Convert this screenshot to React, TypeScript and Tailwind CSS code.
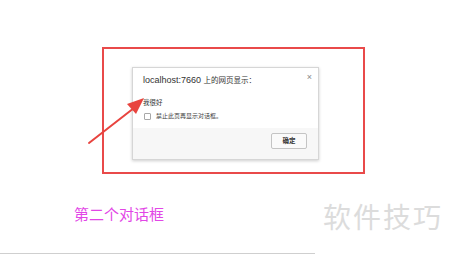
import React from 'react';

const cjk = { fontFamily: '"Liberation Sans", "Noto Sans CJK SC", sans-serif' };

const Arrow: React.FC = () => (
  <svg className="absolute left-0 top-0 pointer-events-none" width="450" height="254" viewBox="0 0 450 254">
    <line x1="89" y1="143" x2="134" y2="108" stroke="#e8443f" strokeWidth="2" strokeLinecap="round" />
    <polygon points="144,98 127,104 136,114" fill="#e8443f" />
  </svg>
);

const Dialog: React.FC = () => (
  <div className="w-[187px] h-[93px] bg-white border border-[#d6d6d6] shadow-[0_1px_3px_rgba(0,0,0,0.2)] flex flex-col">
    <div className="h-[23px] flex items-start justify-between pl-[10px] pr-[6px] pt-[6px]">
      <span className="text-[9px] leading-[12px] text-[#333]">
        localhost:7660 <span className="text-[7.5px]">上的网页显示：</span>
      </span>
      <span className="text-[9px] leading-[9px] text-[#888] mt-[-1px]">×</span>
    </div>
    <div className="pl-[10px] pt-[7px] flex flex-col gap-[5px]">
      <span className="text-[6.5px] leading-[9px] text-[#333]">我很好</span>
      <div className="flex items-center gap-[5px] pl-[1px]">
        <span className="w-[7px] h-[7px] border border-[#a8a8a8] rounded-[1px] bg-white" />
        <span className="text-[6px] leading-[8px] text-[#444]">禁止此页再显示对话框。</span>
      </div>
    </div>
    <div className="flex-1 bg-[#f7f7f7] mt-[8px] flex justify-end items-start pt-[5px] pr-[11px]">
      <div className="w-[36px] h-[16px] border border-[#c4c4c4] rounded-[2px] bg-[#fafafa] flex items-center justify-center">
        <span className="text-[6.5px] leading-[8px] font-bold text-[#333]">确定</span>
      </div>
    </div>
  </div>
);

const App: React.FC = () => {
  return (
    <div className="relative w-[450px] h-[254px] bg-white overflow-hidden" style={cjk}>
      <div className="pt-[47px] pl-[102px]">
        <div className="w-[263px] h-[127px] border-2 border-[#e94a4a] pt-[18px] pl-[28px]">
          <Dialog />
        </div>
      </div>
      <div className="flex items-start justify-between mt-[28px] pl-[74px] pr-[7px]">
        <span className="text-[15px] leading-[20px] text-[#e246e6] mt-[3px]">第二个对话框</span>
        <span className="text-[28px] leading-[34px] tracking-[2px] text-[#dcdcdc]">软件技巧</span>
      </div>
      <div className="absolute left-0 bottom-0 w-[315px] h-px bg-[#cfcfcf]" />
      <Arrow />
    </div>
  );
};

export default App;
